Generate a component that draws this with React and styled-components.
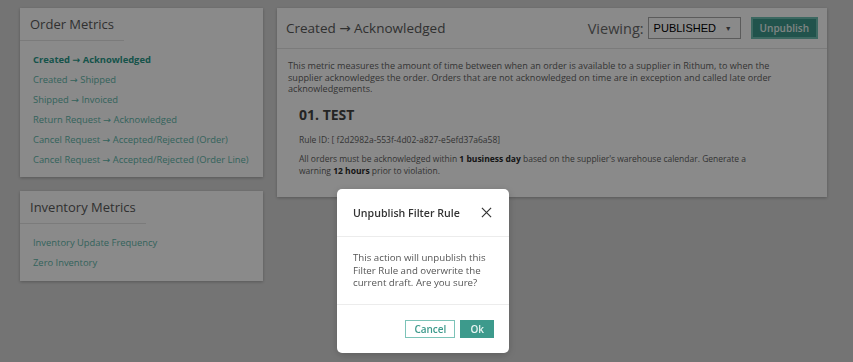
import React from 'react';
import styled, { createGlobalStyle } from 'styled-components';

const GlobalStyle = createGlobalStyle`
  html, body {
    margin: 0;
    padding: 0;
    background: #d7d7d7;
    font-family: "Open Sans", "DejaVu Sans", sans-serif;
    color: #555;
  }
  * { box-sizing: border-box; }
`;

const Page = styled.div`
  display: flex;
  align-items: flex-start;
  gap: 14px;
  padding: 8px 26px 0 20px;
  min-height: 362px;
`;

const Sidebar = styled.div`
  display: flex;
  flex-direction: column;
  gap: 14px;
  width: 243px;
  flex-shrink: 0;
`;

const Card = styled.section`
  background: #fff;
  box-shadow: 0 1px 3px rgba(0, 0, 0, 0.25);
`;

const CardTitle = styled.h2`
  display: inline-block;
  margin: 0;
  padding: 7px 10px 7px 10px;
  height: 33px;
  font-size: 13px;
  font-weight: 400;
  line-height: 18px;
  color: #5a5a5a;
  border-bottom: 1px solid #e4e4e4;
`;

const LinkList = styled.ul`
  list-style: none;
  margin: 0;
  padding: ${(p) => p.$pad || '9px 0 7px 13px'};
`;

const MetricLink = styled.li`
  font-size: 9.4px;
  line-height: 20px;
  color: ${(p) => (p.$active ? '#2a9a8a' : '#5fb8ab')};
  font-weight: ${(p) => (p.$active ? 700 : 400)};
  white-space: nowrap;
`;

const Main = styled(Card)`
  flex: 1;
`;

const MainHeader = styled.header`
  display: flex;
  align-items: center;
  height: 41px;
  padding: 0 9px 0 9px;
  border-bottom: 1px solid #e4e4e4;
`;

const MainTitle = styled.h1`
  flex: 1;
  margin: 0;
  font-size: 13.5px;
  font-weight: 400;
  color: #5a5a5a;
`;

const ViewingLabel = styled.span`
  font-size: 14.5px;
  color: #6a6a6a;
  margin-right: 4px;
`;

const Select = styled.div`
  display: flex;
  align-items: center;
  justify-content: space-between;
  width: 93px;
  height: 22px;
  padding: 0 8px 0 5px;
  border: 1px solid #a9a9a9;
  background: #fff;
  font-family: "Liberation Sans", Arial, sans-serif;
  font-size: 11px;
  color: #000;
  margin-right: 10px;
`;

const Caret = styled.span`
  font-size: 7px;
  color: #555;
`;

const Button = styled.button`
  height: ${(p) => p.$h || '22px'};
  padding: 0 ${(p) => p.$px || '7px'};
  border: ${(p) => p.$border || '2px solid #6fc0b4'};
  background: ${(p) => (p.$outline ? '#fff' : '#3d9a8c')};
  color: ${(p) => (p.$outline ? '#3d9a8c' : '#eaf5f3')};
  font-family: inherit;
  font-size: ${(p) => p.$fs || '10px'};
  font-weight: 600;
  cursor: pointer;
`;

const MainBody = styled.div`
  padding: 11px 11px 20px 11px;
`;

const Description = styled.p`
  margin: 0;
  max-width: 500px;
  font-size: 9.1px;
  line-height: 11.5px;
  color: #5f5f5f;
`;

const Rule = styled.div`
  padding: 0 0 0 11px;
  width: 462px;
`;

const RuleName = styled.h3`
  margin: 10px 0 0;
  font-size: 14px;
  font-weight: 700;
  line-height: 20px;
  color: #444;
`;

const RuleText = styled.p`
  margin: ${(p) => p.$mt || '0'} 0 0;
  font-size: 8.5px;
  line-height: 12px;
  color: #5f5f5f;

  b {
    color: #2a2a2a;
  }
`;

const Overlay = styled.div`
  position: fixed;
  inset: 0;
  background: rgba(0, 0, 0, 0.46);
  display: flex;
  justify-content: center;
  align-items: flex-start;
  padding: 189px 7px 0 0;
`;

const Modal = styled.div`
  width: 172px;
  background: #fff;
  border-radius: 5px;
  box-shadow: 0 2px 8px rgba(0, 0, 0, 0.2);
`;

const ModalHeader = styled.div`
  display: flex;
  align-items: center;
  justify-content: space-between;
  height: 48px;
  padding: 0 16px;
  border-bottom: 1px solid #ececec;
`;

const ModalTitle = styled.h4`
  margin: 0;
  font-size: 10.6px;
  font-weight: 600;
  color: #333;
`;

const Close = styled.svg`
  width: 11px;
  height: 11px;
  margin-right: 1px;
`;

const ModalBody = styled.div`
  padding: 15px 16px 0;
  height: 68px;
  border-bottom: 1px solid #ececec;
  font-size: 9.7px;
  line-height: 12.5px;
  color: #555;
`;

const ModalFooter = styled.div`
  display: flex;
  justify-content: flex-end;
  gap: 5px;
  height: 48px;
  padding: 15px 15px 0;
`;

const orderMetrics = [
  'Created → Acknowledged',
  'Created → Shipped',
  'Shipped → Invoiced',
  'Return Request → Acknowledged',
  'Cancel Request → Accepted/Rejected (Order)',
  'Cancel Request → Accepted/Rejected (Order Line)',
];

const inventoryMetrics = ['Inventory Update Frequency', 'Zero Inventory'];

export default function App() {
  return (
    <>
      <GlobalStyle />
      <Page>
        <Sidebar>
          <Card>
            <CardTitle>Order Metrics</CardTitle>
            <LinkList>
              {orderMetrics.map((m, i) => (
                <MetricLink key={m} $active={i === 0}>
                  {m}
                </MetricLink>
              ))}
            </LinkList>
          </Card>
          <Card>
            <CardTitle>Inventory Metrics</CardTitle>
            <LinkList $pad="9px 0 8px 13px">
              {inventoryMetrics.map((m) => (
                <MetricLink key={m}>{m}</MetricLink>
              ))}
            </LinkList>
          </Card>
        </Sidebar>
        <Main>
          <MainHeader>
            <MainTitle>Created → Acknowledged</MainTitle>
            <ViewingLabel>Viewing:</ViewingLabel>
            <Select>
              PUBLISHED <Caret>▼</Caret>
            </Select>
            <Button>Unpublish</Button>
          </MainHeader>
          <MainBody>
            <Description>
              This metric measures the amount of time between when an order is available to a
              supplier in Rithum, to when the supplier acknowledges the order. Orders that are not
              acknowledged on time are in exception and called late order acknowledgements.
            </Description>
            <Rule>
              <RuleName>01. TEST</RuleName>
              <RuleText $mt="9px">Rule ID: [ f2d2982a-553f-4d02-a827-e5efd37a6a58]</RuleText>
              <RuleText $mt="7px">
                All orders must be acknowledged within <b>1 business day</b> based on the
                supplier's warehouse calendar. Generate a warning <b>12 hours</b> prior to
                violation.
              </RuleText>
            </Rule>
          </MainBody>
        </Main>
      </Page>
      <Overlay>
        <Modal>
          <ModalHeader>
            <ModalTitle>Unpublish Filter Rule</ModalTitle>
            <Close viewBox="0 0 12 12">
              <path d="M1 1L11 11M11 1L1 11" stroke="#333" strokeWidth="1.3" fill="none" />
            </Close>
          </ModalHeader>
          <ModalBody>
            This action will unpublish this Filter Rule and overwrite the current draft. Are you
            sure?
          </ModalBody>
          <ModalFooter>
            <Button $outline $border="1px solid #7cc3b8" $h="18px" $px="8px">
              Cancel
            </Button>
            <Button $border="none" $h="18px" $px="10px">
              Ok
            </Button>
          </ModalFooter>
        </Modal>
      </Overlay>
    </>
  );
}
